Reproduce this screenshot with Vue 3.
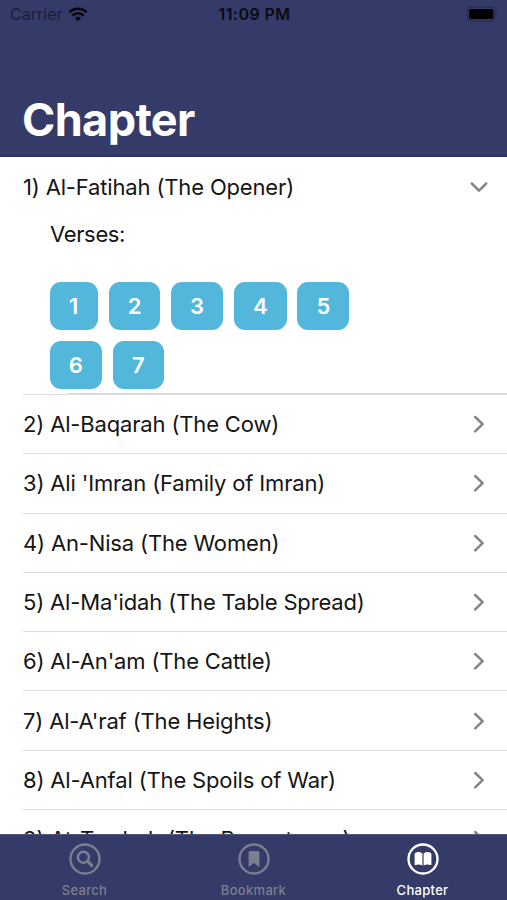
<script setup>
const verseRows = [
  [
    { n: 1, w: 48.5, gap: 0 },
    { n: 2, w: 51, gap: 11 },
    { n: 3, w: 52, gap: 11 },
    { n: 4, w: 52.5, gap: 11 },
    { n: 5, w: 52, gap: 10.8 },
  ],
  [
    { n: 6, w: 52.5, gap: 0 },
    { n: 7, w: 50.5, gap: 11 },
  ],
]
const chapters = [
  '2) Al-Baqarah (The Cow)',
  "3) Ali 'Imran (Family of Imran)",
  '4) An-Nisa (The Women)',
  "5) Al-Ma'idah (The Table Spread)",
  "6) Al-An'am (The Cattle)",
  "7) Al-A'raf (The Heights)",
  '8) Al-Anfal (The Spoils of War)',
  '9) At-Tawbah (The Repentance)',
]
</script>

<template>
  <div class="screen">
    <header class="header">
      <div class="status">
        <div class="carrier">
          <span>Carrier</span>
          <svg class="wifi" width="20" height="15" viewBox="0 0 20 15">
            <path d="M1.3 5.2A12.6 12.6 0 0 1 18.7 5.2" />
            <path d="M4.3 8.5A8.3 8.3 0 0 1 15.7 8.5" />
            <path class="dot" d="M10 14.2L6.8 11A4.6 4.6 0 0 1 13.2 11Z" />
          </svg>
        </div>
        <span class="time">11:09 PM</span>
        <svg class="battery" width="33" height="17" viewBox="0 0 33 17">
          <rect x="1.2" y="1.2" width="28" height="13.6" rx="4" fill="none" stroke="#262b59" stroke-width="1.2" />
          <rect x="3" y="3" width="24.4" height="10" rx="2" fill="#000" />
          <path d="M30.8 5.8Q33.2 8 30.8 10.2Z" fill="#262b59" />
        </svg>
      </div>
      <h1>Chapter</h1>
    </header>

    <main class="list">
      <section class="open">
        <div class="row first">
          <span>1) Al-Fatihah (The Opener)</span>
          <svg class="chev" width="18" height="18" viewBox="0 0 18 18"><path d="M1.8 5.5L9 12.6L16.2 5.5" /></svg>
        </div>
        <p class="verses">Verses:</p>
        <div class="grid">
          <div v-for="(r, i) in verseRows" :key="i" class="grid-row">
            <button
              v-for="v in r"
              :key="v.n"
              class="verse"
              :style="{ width: v.w + 'px', marginLeft: v.gap + 'px' }"
            >{{ v.n }}</button>
          </div>
        </div>
        <div class="inset-line"></div>
      </section>
      <div v-for="c in chapters" :key="c" class="row">
        <span>{{ c }}</span>
        <svg class="chev" width="18" height="18" viewBox="0 0 18 18"><path d="M5.2 2L12.6 9.2L5.2 16.4" /></svg>
      </div>
    </main>

    <nav class="tabs">
      <div class="tab">
        <svg width="32" height="32" viewBox="0 0 32 32">
          <circle class="ring" cx="16" cy="16" r="14.5" />
          <circle class="ring" cx="14.4" cy="14.2" r="5.5" />
          <path class="handle" d="M18.6 18.4L22.8 22.6" />
        </svg>
        <span>Search</span>
      </div>
      <div class="tab">
        <svg width="32" height="32" viewBox="0 0 32 32">
          <circle class="ring" cx="16" cy="16" r="14.5" />
          <path class="fill" d="M10.6 9.5Q10.6 7.9 12.2 7.9H19.8Q21.4 7.9 21.4 9.5V23.2Q21.4 24.3 20.4 23.6L16 19.7L11.6 23.6Q10.6 24.3 10.6 23.2Z" />
        </svg>
        <span>Bookmark</span>
      </div>
      <div class="tab active">
        <svg width="32" height="32" viewBox="0 0 32 32">
          <circle class="ring" cx="16" cy="16" r="14.5" />
          <path class="fill" d="M15.4 10.6Q11.8 7.9 8.2 10.1Q7.6 10.5 7.6 11.3V21.2Q7.6 22.4 8.7 21.9Q12.2 20.6 15.4 22.6Z" />
          <path class="fill" d="M16.6 10.6Q20.2 7.9 23.8 10.1Q24.4 10.5 24.4 11.3V21.2Q24.4 22.4 23.3 21.9Q19.8 20.6 16.6 22.6Z" />
        </svg>
        <span>Chapter</span>
      </div>
    </nav>
  </div>
</template>

<style>
body {
  margin: 0;
  overflow: hidden;
}
</style>

<style scoped>
.screen {
  display: flex;
  flex-direction: column;
  width: 507px;
  height: 900px;
  overflow: hidden;
  background: #fff;
  color: #151515;
  font-family: Inter, 'Liberation Sans', sans-serif;
}
.header {
  flex: none;
  box-sizing: border-box;
  height: 157px;
  background: #343b69;
  border-bottom: 2px solid #2d3265;
}
.status {
  display: grid;
  grid-template-columns: 1fr auto 1fr;
  align-items: center;
  height: 29px;
  padding: 0 8px 0 10px;
  color: #0a0b14;
  font-size: 16px;
  line-height: 29px;
}
.carrier {
  display: flex;
  align-items: center;
  gap: 6px;
  color: #1b1e38;
}
.wifi path {
  fill: none;
  stroke: #05060c;
  stroke-width: 2.6;
}
.wifi .dot {
  fill: #05060c;
  stroke: none;
}
.time {
  font-weight: 600;
  letter-spacing: 0.45px;
}
.battery {
  justify-self: end;
}
h1 {
  margin: 63px 0 0 22px;
  color: #fff;
  font-size: 45px;
  font-weight: 700;
  line-height: 56px;
  letter-spacing: -0.6px;
}
.list {
  flex: 1;
  min-height: 0;
  overflow: hidden;
}
.open {
  display: flex;
  flex-direction: column;
  box-sizing: border-box;
  height: 237px;
}
.row {
  display: flex;
  flex: none;
  box-sizing: border-box;
  justify-content: space-between;
  align-items: center;
  height: 59.3px;
  margin-left: 23px;
  padding-right: 19px;
  border-top: 1px solid #dedede;
  font-size: 22px;
  letter-spacing: -0.16px;
  white-space: nowrap;
}
.first {
  border-top-color: transparent;
}
.chev {
  flex: none;
}
.chev path {
  fill: none;
  stroke: #858585;
  stroke-width: 2.5;
  stroke-linecap: round;
  stroke-linejoin: round;
}
.verses {
  margin: 3px 0 0 50px;
  font-size: 22px;
  line-height: 30px;
  letter-spacing: -0.35px;
}
.grid {
  display: flex;
  flex-direction: column;
  gap: 11.3px;
  padding: 32.5px 0 0 49.5px;
}
.inset-line {
  height: 1px;
  margin: auto 0 0 68px;
  background: #dadada;
}
.grid-row {
  display: flex;
}
.verse {
  box-sizing: border-box;
  height: 48px;
  padding: 0;
  border: 0;
  border-radius: 11px;
  background: #53b7db;
  color: #fff;
  font-family: inherit;
  font-size: 22px;
  font-weight: 600;
  line-height: 48px;
  text-align: center;
}
.tabs {
  display: flex;
  flex: none;
  box-sizing: border-box;
  height: 66px;
  border-top: 1px solid #50567f;
  background: #343b69;
}
.tab {
  display: flex;
  flex: 1;
  flex-direction: column;
  align-items: center;
  padding-top: 8px;
  color: #7b7f8f;
  font-size: 13px;
  font-weight: 500;
  line-height: 16px;
  letter-spacing: 0.3px;
}
.tab span {
  margin-top: 7px;
}
.tab.active {
  color: #fff;
}
.ring,
.handle {
  fill: none;
  stroke: currentColor;
  stroke-width: 2.4;
}
.handle {
  stroke-width: 3;
  stroke-linecap: round;
}
.fill {
  fill: currentColor;
}
</style>
